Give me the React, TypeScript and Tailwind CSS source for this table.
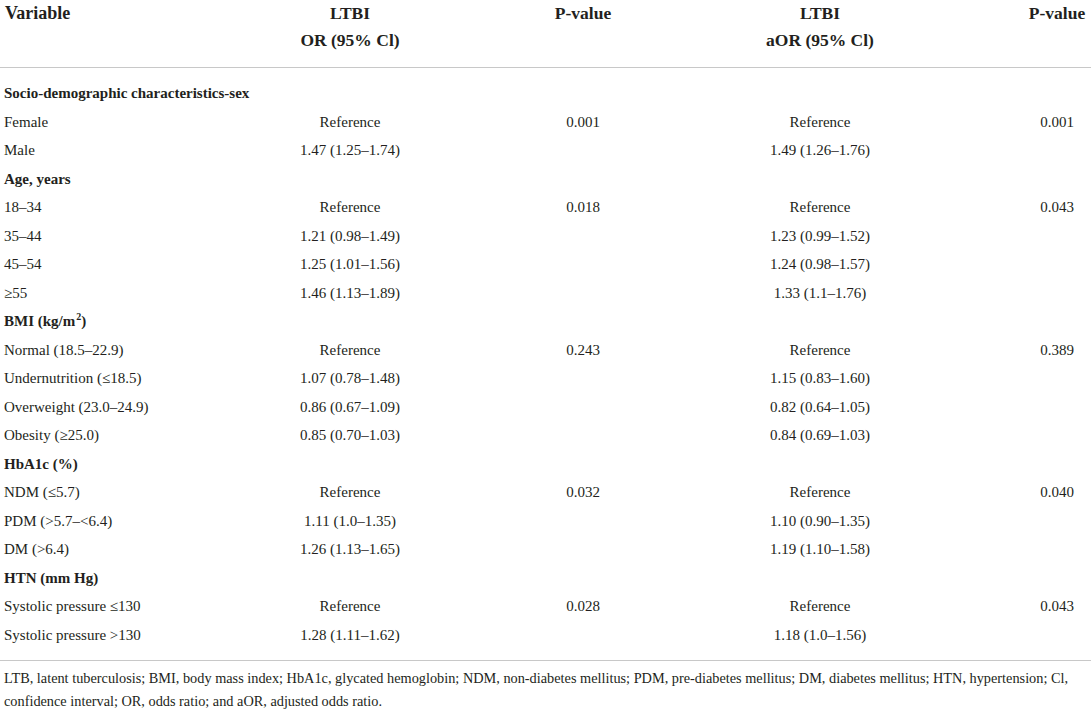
import React from "react";

type Row =
  | { kind: "section"; label: React.ReactNode }
  | { kind: "data"; label: React.ReactNode; or: string; p1?: string; aor: string; p2?: string };

const rows: Row[] = [
  { kind: "section", label: "Socio-demographic characteristics-sex" },
  { kind: "data", label: "Female", or: "Reference", p1: "0.001", aor: "Reference", p2: "0.001" },
  { kind: "data", label: "Male", or: "1.47 (1.25–1.74)", aor: "1.49 (1.26–1.76)" },
  { kind: "section", label: "Age, years" },
  { kind: "data", label: "18–34", or: "Reference", p1: "0.018", aor: "Reference", p2: "0.043" },
  { kind: "data", label: "35–44", or: "1.21 (0.98–1.49)", aor: "1.23 (0.99–1.52)" },
  { kind: "data", label: "45–54", or: "1.25 (1.01–1.56)", aor: "1.24 (0.98–1.57)" },
  { kind: "data", label: "≥55", or: "1.46 (1.13–1.89)", aor: "1.33 (1.1–1.76)" },
  {
    kind: "section",
    label: (
      <>
        BMI (kg/m<span className="text-[10px] relative -top-[6px] ml-[1px]">2</span>)
      </>
    ),
  },
  { kind: "data", label: "Normal (18.5–22.9)", or: "Reference", p1: "0.243", aor: "Reference", p2: "0.389" },
  { kind: "data", label: "Undernutrition (≤18.5)", or: "1.07 (0.78–1.48)", aor: "1.15 (0.83–1.60)" },
  { kind: "data", label: "Overweight (23.0–24.9)", or: "0.86 (0.67–1.09)", aor: "0.82 (0.64–1.05)" },
  { kind: "data", label: "Obesity (≥25.0)", or: "0.85 (0.70–1.03)", aor: "0.84 (0.69–1.03)" },
  { kind: "section", label: "HbA1c (%)" },
  { kind: "data", label: "NDM (≤5.7)", or: "Reference", p1: "0.032", aor: "Reference", p2: "0.040" },
  { kind: "data", label: "PDM (>5.7–<6.4)", or: "1.11 (1.0–1.35)", aor: "1.10 (0.90–1.35)" },
  { kind: "data", label: "DM (>6.4)", or: "1.26 (1.13–1.65)", aor: "1.19 (1.10–1.58)" },
  { kind: "section", label: "HTN (mm Hg)" },
  { kind: "data", label: "Systolic pressure ≤130", or: "Reference", p1: "0.028", aor: "Reference", p2: "0.043" },
  { kind: "data", label: "Systolic pressure >130", or: "1.28 (1.11–1.62)", aor: "1.18 (1.0–1.56)" },
];

const gridCols = "grid grid-cols-[260px_180px_286px_188px_113px_60px] pr-[4px]";

export default function App() {
  return (
    <div
      className="w-[1091px] h-[711px] bg-white text-[#231f20] overflow-hidden"
      style={{ fontFamily: '"Liberation Serif", "Times New Roman", serif' }}
    >
      {/* Header */}
      <div className={`${gridCols} font-bold text-[17.5px] leading-[27px] pb-[13px] border-b border-[#c8c8c8]`}>
        <div className="pl-[5px] text-[18px]">Variable</div>
        <div className="text-center">
          LTBI
          <br />
          OR (95% Cl)
        </div>
        <div className="text-center">P-value</div>
        <div className="text-center">
          LTBI
          <br />
          aOR (95% Cl)
        </div>
        <div />
        <div className="text-center">P-value</div>
      </div>

      {/* Body */}
      <div className="pt-[11px] pb-[11px] border-b border-[#c8c8c8] text-[15px] leading-[28.53px]">
        {rows.map((r, i) =>
          r.kind === "section" ? (
            <div key={i} className={`${gridCols} h-[28.53px]`}>
              <div className="col-span-6 pl-[4px] font-bold whitespace-nowrap">{r.label}</div>
            </div>
          ) : (
            <div key={i} className={`${gridCols} h-[28.53px]`}>
              <div className="pl-[4px] whitespace-nowrap">{r.label}</div>
              <div className="text-center whitespace-nowrap">{r.or}</div>
              <div className="text-center">{r.p1 ?? ""}</div>
              <div className="text-center whitespace-nowrap">{r.aor}</div>
              <div />
              <div className="text-center">{r.p2 ?? ""}</div>
            </div>
          )
        )}
      </div>

      {/* Footnote */}
      <div className="pt-[6px] pl-[4px] text-[14.3px] leading-[23px] whitespace-nowrap">
        LTB, latent tuberculosis; BMI, body mass index; HbA1c, glycated hemoglobin; NDM, non-diabetes mellitus; PDM,
        pre-diabetes mellitus; DM, diabetes mellitus; HTN, hypertension; Cl,
        <br />
        confidence interval; OR, odds ratio; and aOR, adjusted odds ratio.
      </div>
    </div>
  );
}
